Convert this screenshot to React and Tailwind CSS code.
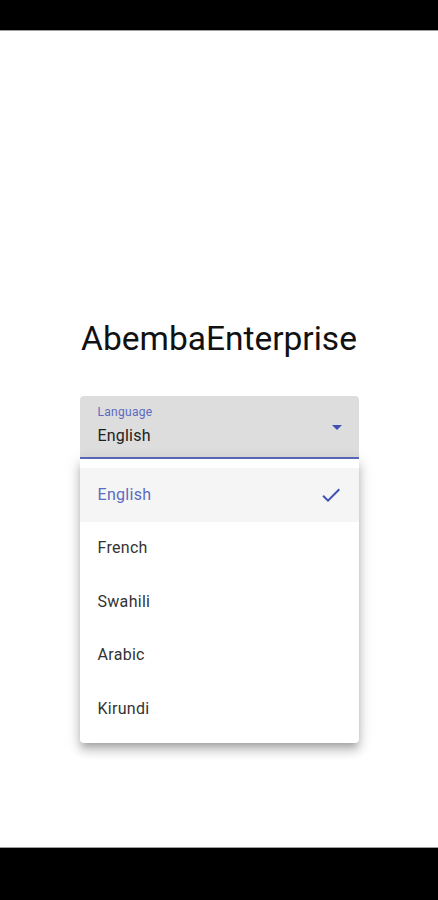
import React, { useState } from "react";

const languages = ["English", "French", "Swahili", "Arabic", "Kirundi"];

const App = () => {
  const [selected, setSelected] = useState("English");

  return (
    <div
      className="h-[900px] w-full flex flex-col bg-white"
      style={{ fontFamily: "Roboto, 'Noto Sans', sans-serif" }}
    >
      <div className="h-[31px] bg-black border-b border-[#9e9e9e]"></div>

      <div className="flex-1 flex flex-col items-center pt-[286px]">
        <h1 className="text-[33.5px] leading-[44px] text-[#111]">
          AbembaEnterprise
        </h1>

        <div className="w-[279px] mt-[35px]">
          <div className="h-[63px] bg-[#dddddd] rounded-t-[4px] border-b-2 border-[#5c6bc0] flex items-start pt-[8px] pl-[18px] pr-[17px]">
            <div className="flex-1 flex flex-col">
              <span className="text-[12px] leading-[16px] text-[#5c6bc0] tracking-[0.3px]">
                Language
              </span>
              <span className="text-[16px] leading-[22px] text-[#212121] mt-[5px] tracking-[0.2px]">
                {selected}
              </span>
            </div>
            <svg width="10" height="5" viewBox="0 0 10 5" className="self-center -mt-[6px]">
              <path d="M0 0 L10 0 L5 5 Z" fill="#3f51b5" />
            </svg>
          </div>

          <div className="bg-white rounded-b-[4px] pt-[9px] pb-[7px] shadow-[0_5px_6px_-3px_rgba(0,0,0,0.2),0_8px_10px_1px_rgba(0,0,0,0.14),0_3px_14px_2px_rgba(0,0,0,0.12)]">
            {languages.map((lang) => (
              <div
                key={lang}
                onClick={() => setSelected(lang)}
                className={`h-[53.5px] flex items-center justify-between pl-[18px] pr-[16px] text-[16px] tracking-[0.3px] ${
                  lang === selected
                    ? "bg-[#f5f5f5] text-[#5c6bc0]"
                    : "text-[#333333]"
                }`}
              >
                <span>{lang}</span>
                {lang === selected && (
                  <svg width="24" height="24" viewBox="0 0 24 24">
                    <path
                      d="M9 16.17 4.83 12l-1.42 1.41L9 19 21 7l-1.41-1.41z"
                      fill="#3f51b5"
                    />
                  </svg>
                )}
              </div>
            ))}
          </div>
        </div>
      </div>

      <div className="h-[53px] bg-black border-t border-[#9e9e9e]"></div>
    </div>
  );
};

export default App;
